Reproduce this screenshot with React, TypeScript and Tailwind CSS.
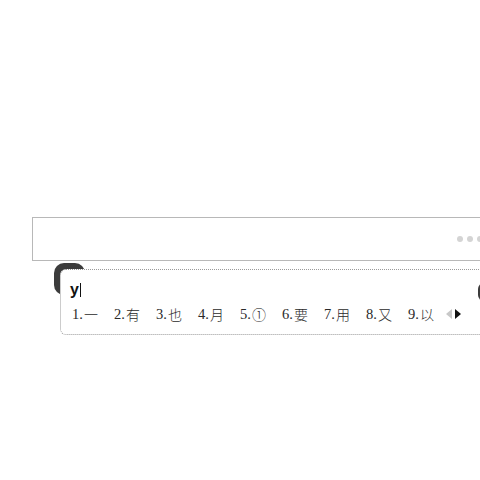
const candidates = ["一", "有", "也", "月", "①", "要", "用", "又", "以"];

export default function App() {
  return (
    <div className="h-[480px] w-[480px] overflow-hidden bg-white pl-[32px] pt-[217px]">
      {/* Input box */}
      <div className="flex h-[44px] w-[480px] items-center gap-[4px] border border-[#b8b8b8] bg-white pl-[424px]">
        <span className="h-[6px] w-[6px] rounded-full bg-[#d4d4d4]" />
        <span className="h-[6px] w-[6px] rounded-full bg-[#d4d4d4]" />
        <span className="h-[6px] w-[6px] rounded-full bg-[#d4d4d4]" />
      </div>

      {/* IME candidate panel */}
      <div className="relative ml-[28px] mt-[8px] w-[460px]">
        <div className="absolute -left-[6px] -top-[6px] h-[32px] w-[31px] rounded-[10px] bg-[#3c3c3c]" />
        <div className="relative h-[66px] rounded-[6px] border border-dotted border-[#9a9a9a] bg-white pl-[9px] pt-[10px] font-['Liberation_Serif','Noto_Sans_CJK_SC',serif] text-[14px] text-[#2a2a2a]">
          <div className="flex h-[20px] items-center">
            <span className="font-['Liberation_Sans',sans-serif] text-[16px] font-bold leading-none text-[#111]">y</span>
            <span className="ml-[1px] h-[14px] w-px bg-[#111]" />
          </div>
          <div className="mt-[4px] flex h-[20px] items-center">
            {candidates.map((c, i) => (
              <div key={i} className="flex w-[42px] shrink-0 items-center">
                <span className="w-[14px] pl-[2px] text-[14.5px] leading-none">{i + 1}.</span>
                <span className="font-['Noto_Sans_CJK_SC',sans-serif] text-[14px] font-light leading-none">{c}</span>
              </div>
            ))}
            <div className="ml-[-2px] flex items-center gap-[2px]">
              <svg width="7" height="10" viewBox="0 0 7 10">
                <path d="M6 0 L0 5 L6 10 Z" fill="#c8c8c8" />
              </svg>
              <svg width="7" height="10" viewBox="0 0 7 10">
                <path d="M0 0 L6 5 L0 10 Z" fill="#111" />
              </svg>
            </div>
          </div>
        </div>
        <div className="absolute left-[418px] top-[14px] h-[18px] w-[12px] rounded-full bg-[#3c3c3c]" />
      </div>
    </div>
  );
}
